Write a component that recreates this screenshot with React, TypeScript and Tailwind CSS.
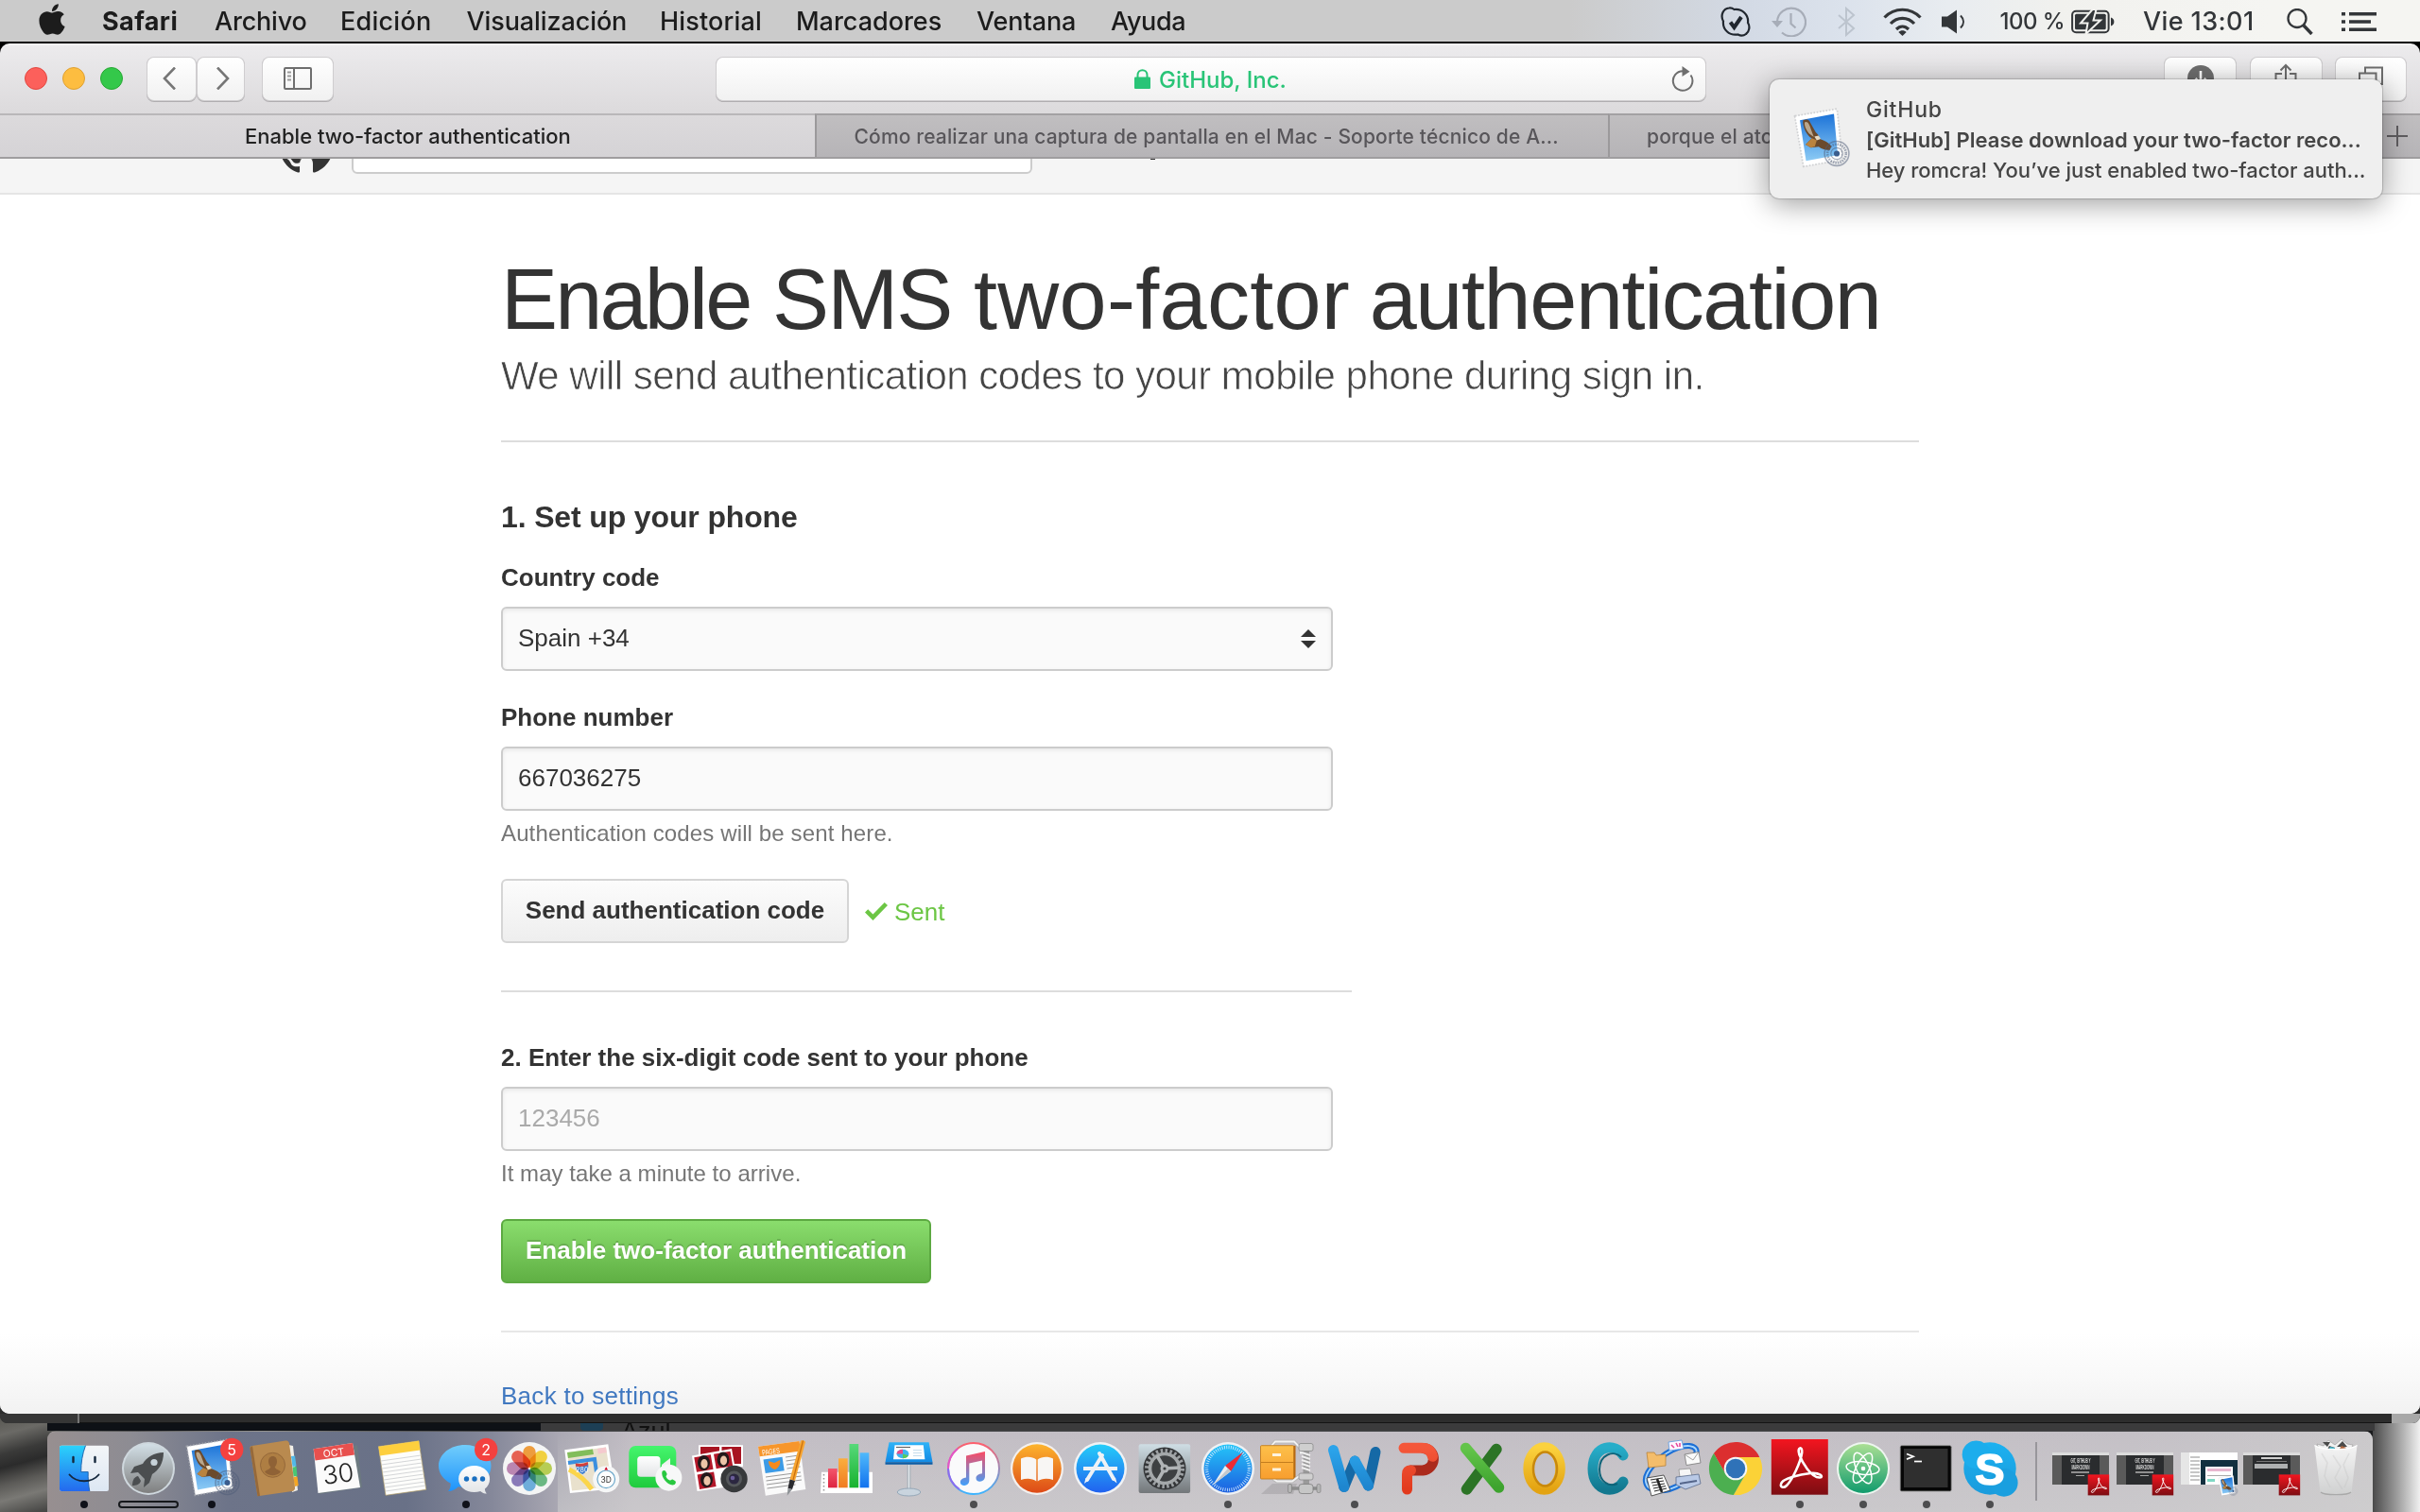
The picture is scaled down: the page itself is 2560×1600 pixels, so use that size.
import React from "react";
import { FaApple } from "react-icons/fa";

type IconProps = { className?: string };

/* ---------- Dock icons, all on a 64 × 64 grid ---------- */

function Svg({ children, className }: { children: React.ReactNode; className?: string }) {
  return (
    <svg viewBox="0 0 64 64" className={className ?? "h-16 w-16 overflow-visible"}>
      {children}
    </svg>
  );
}

function Defs() {
  const stops: [string, string, string][] = [
    ["gFinderL", "#2bd3fb", "#2469ee"],
    ["gFinderR", "#f4f6f8", "#dde7f3"],
    ["gLaunch", "#d2dfe6", "#7f7f7f"],
    ["gSky", "#1c73d8", "#8ccbf5"],
    ["gMsg", "#71cdfb", "#1e93fb"],
    ["gWhite", "#ffffff", "#e2e4e6"],
    ["gFace", "#45f56d", "#1fcb3d"],
    ["gRing", "#ff5f6d", "#3cb4ff"],
    ["gNote", "#fb4b63", "#3fa0fb"],
    ["gBooks", "#fdb42d", "#dd4a17"],
    ["gStore", "#25cdf9", "#2162ef"],
    ["gPrefs", "#cfdee5", "#73777a"],
    ["gSafari", "#25c5f8", "#1c5fe0"],
    ["gCab", "#fdc04a", "#f89e2f"],
    ["gW", "#2ba3ea", "#1e86cf"],
    ["gP", "#f4573a", "#e23a1d"],
    ["gX", "#63c44a", "#3da32e"],
    ["gO", "#fbd23e", "#e3a312"],
    ["gC", "#27adc9", "#12788f"],
    ["gAcro", "#f3151f", "#7d0d12"],
    ["gAtom", "#aadf94", "#119b6d"],
    ["gSkype", "#1cb1f0", "#1a9bdc"],
    ["gKey", "#2fb3f7", "#138ae4"],
    ["gRed", "#f4566c", "#dd2440"],
    ["gOrg", "#fbae3d", "#f07c22"],
    ["gGrn", "#57d97a", "#17b22e"],
    ["gBlu", "#4fb9fb", "#1272ee"],
    ["gTrash", "#f7f7f7", "#cfd0d0"],
  ];
  return (
    <svg className="absolute h-0 w-0">
      <defs>
        {stops.map(([id, a, b]) => (
          <linearGradient key={id} id={id} x1="0" y1="0" x2="0" y2="1">
            <stop offset="0" stopColor={a} />
            <stop offset="1" stopColor={b} />
          </linearGradient>
        ))}
      </defs>
    </svg>
  );
}

function Badge({ n }: { n: string }) {
  return (
    <>
      <circle cx="53.2" cy="12" r="12.2" fill="#f4413f" />
      <text x="53.2" y="17.6" fontSize="16" fontFamily="Inter, sans-serif" textAnchor="middle" fill="#fff">
        {n}
      </text>
    </>
  );
}

const Finder = () => (
  <Svg>
    <rect x="6" y="7.7" width="52" height="48.3" rx="2" fill="url(#gFinderR)" />
    <path d="M8 7.7H33.5C30 17 28.7 26 28.7 35.6H36.2C36 42 36.6 50 37.8 56H8a2 2 0 0 1-2-2V9.7a2 2 0 0 1 2-2z" fill="url(#gFinderL)" />
    <path d="M33.5 7.7C30 17 28.7 26 28.7 35.6H36.2C36 42 36.6 50 37.8 56" fill="none" stroke="#1b5fa8" strokeWidth=".9" />
    <path d="M20.5 20v5M43.5 20v5" stroke="#14273c" strokeWidth="2.4" strokeLinecap="round" />
    <path d="M16.5 38.5C24 47.5 40 47.5 47.5 38.5" fill="none" stroke="#14273c" strokeWidth="1.9" strokeLinecap="round" />
  </Svg>
);

const Launchpad = () => (
  <Svg>
    <circle cx="32" cy="32" r="28" fill="#cfd8de" />
    <circle cx="32" cy="32" r="26" fill="url(#gLaunch)" />
    <path d="M48 15C38 15 30 20 26 27l-9 3-4 7 8-1 7 7-1 9 6-5 3-9C43 34 48 26 48 15z" fill="#4b4e50" />
    <circle cx="38" cy="25.5" r="3.6" fill="#c6d2d9" />
    <path d="M21 40c-5 1-6 6-6 10 4 0 8-1 9-5" fill="#4b4e50" />
  </Svg>
);

const MailStamp = ({ badge, className }: { badge?: string } & IconProps) => (
  <Svg className={className}>
    <path d="M5.8 8.7L48.5 1.5 54 53 14.6 60z" fill="#fff" stroke="#b9bbbe" strokeOpacity=".6" strokeWidth="2.4" strokeDasharray="1.6 1.6" />
    <path d="M6.4 9.3L48 2.2 53.3 52.5 15.1 59.3z" fill="#fff" />
    <path d="M10.7 12.9L45.6 6.4 49.5 48.500 17 54.600z" fill="url(#gSky)" />
    <path d="M13.900 12.900C17 11.500 19.500 12 20.400 13.600L26.800 24.900C29 27 31 29.500 31.700 32.300 36 33.500 40 36 43 39.400L41.400 43.300C38 44 33 42.500 30 40L22 41 16.500 37.800 23 31.300C18 29.500 13 19 13.900 12.900z" fill="#6b4a2c" />
    <path d="M15.500 15c3-2 5 2 6.500 7l3 8-5-3.500c-3-4-5-8-4.500-11.500z" fill="#b9a68c" />
    <path d="M16.500 37.800L23 31.300l5 2.200-2 6.200-4 1.300z" fill="#b9833f" />
    <path d="M25.500 29.500l4.500-.8 2 3.200-4 1.500z" fill="#e8dcc4" />
    <g fill="none" stroke="#4d5c78" strokeOpacity=".5">
      <circle cx="48.5" cy="47" r="12.5" strokeWidth="1.5" />
      <circle cx="48.5" cy="47" r="9.5" strokeWidth="2.5" strokeDasharray="1.5 1" />
      <circle cx="48.5" cy="47" r="6" strokeWidth="1.2" />
    </g>
    <circle cx="48.5" cy="47" r="3" fill="#3b5d8d" />
    {badge && <Badge n={badge} />}
  </Svg>
);

const Contacts = () => (
  <Svg>
    <path d="M46 7l5 1 5 47-6 2z" fill="#f2efe8" />
    <path d="M49 19l4-.5 1.5 11-4 .5z" fill="#52b9e8" />
    <path d="M50.5 30.5l4-.5 1 10-4 .5z" fill="#48c774" />
    <path d="M51.5 41l4-.5 1.2 9.5-4 1z" fill="#f5a623" />
    <path d="M7.5 8L43 2.5c2-.3 3.6.8 4 2.8L53 52c.3 2-.8 3.6-2.8 4L13.5 61.3 5.4 10c0-1 .8-1.8 2.1-2z" fill="#b98a4f" />
    <path d="M5.4 10l8.1 51.3 2.5-.4L8 8z" fill="#96693a" />
    <circle cx="29.5" cy="28.3" r="13" fill="#ae7e43" stroke="#94683a" strokeWidth="1" />
    <path d="M29.5 19c3 0 4.5 2.4 4.5 5.5 0 2.5-1 4.5-2.3 5.8.3 2.5 4.3 3 6.3 5.2-4.5 5-12.5 5-17 0 2-2.2 6-2.7 6.3-5.2C26 29 25 27 25 24.5c0-3.1 1.5-5.5 4.5-5.5z" fill="#8f6236" />
  </Svg>
);

const CalendarIcon = () => (
  <Svg>
    <path d="M8 18l44-11 5 45-45 7z" fill="#6d7a80" />
    <path d="M5.7 11.3L47 5l8 47-44.5 6z" fill="#fbfbfb" />
    <path d="M5.7 11.3L47 5l2 12.5L7.5 23.5z" fill="#e8504e" />
    <g transform="rotate(-7 32 32)">
      <text x="29" y="18.5" fontSize="10.5" fontFamily="Inter, sans-serif" textAnchor="middle" fill="#fff">
        OCT
      </text>
      <text x="31" y="47" fontSize="27" fontWeight="300" fontFamily="Inter, sans-serif" textAnchor="middle" fill="#222">
        30
      </text>
    </g>
  </Svg>
);

const Notes = () => (
  <Svg>
    <path d="M7.4 8.7L50 2.7l7.8 51.6L15 60.3z" fill="#fdfdfb" stroke="#b5a06a" strokeWidth=".7" />
    <path d="M7.4 8.7L50 2.7l1.4 9.8L8.9 18.6z" fill="#fdcf3e" />
    <path
      d="M9.8 24l42.5-6M10.4 28l42.5-6M11 32l42.5-6M11.6 36l42.5-6M12.2 40l42.5-6M12.8 44l42.5-6M13.4 48l42.5-6M14 52l42.5-6M14.6 56l42.5-6"
      stroke="#c9ccce"
      strokeWidth=".8"
    />
  </Svg>
);

const Messages = () => (
  <Svg>
    <path d="M31 7c15.3 0 27.5 9.6 27.5 22.2S46.3 52 31 52c-2.7 0-5-.2-7.3-.8C21 54 17 56 13 56c2-2 3-5 2.5-8.5C7.8 43.5 3 37 3 29.2 3 16.6 15.7 7 31 7z" fill="url(#gMsg)" />
    <path d="M40.6 29c9.2 0 16.5 6 16.5 14 0 4.5-2 8-5.2 10.5 0 2 .8 3.7 2 5-2.6 0-5-1-6.7-2.6-2 .7-4.3 1.1-6.6 1.1-9.2 0-16.5-6-16.5-14s7.3-14 16.5-14z" fill="url(#gWhite)" />
    <g fill="#1a6fc0">
      <circle cx="32.5" cy="43" r="2.7" />
      <circle cx="41" cy="43" r="2.7" />
      <circle cx="49.5" cy="43" r="2.7" />
    </g>
    <Badge n="2" />
  </Svg>
);

const Photos = () => {
  const petals = ["#f7941e", "#fbd220", "#b5cf3a", "#57b573", "#5aa7de", "#7b68b5", "#b877ab", "#ee4b38"];
  return (
    <Svg>
      <circle cx="32" cy="32" r="28" fill="#f4f5f5" />
      {petals.map((c, i) => (
        <rect key={c} x="25.3" y="8" width="13.4" height="23" rx="6.7" fill={c} fillOpacity=".85" className="mix-blend-multiply" transform={`rotate(${i * 45} 32 32)`} />
      ))}
    </Svg>
  );
};

const Maps = () => (
  <Svg>
    <path d="M2.3 12.3L48.3 6.3l7.5 47L8 58z" fill="#fff" />
    <path d="M5 15l41-5.5 6.5 41.5L10 55.5z" fill="#e9e1cd" />
    <path d="M5 15l27-3.5 1 5.5L6 21z" fill="#82bd5a" />
    <path d="M37 11l9-1.5.8 5.5-9 1.5z" fill="#f5c9ce" />
    <path d="M6 26l28-4 4 28" fill="none" stroke="#3a8fdf" strokeWidth="4" />
    <path d="M7 33c10 5 18 12 24 21" fill="none" stroke="#fbd54a" strokeWidth="5" />
    <path d="M14 27.5c4 1 9 .5 13-1.5 1 5 0 9-5.5 12-5-2-7-5-7.5-10.5z" fill="#3b7dd0" />
    <path d="M13.8 26.5c4 1 9 .5 13-1.5l.2 3c-4 2-9 2.5-13 1.5z" fill="#d43f3a" />
    <text x="20.8" y="35.5" fontSize="7" fontFamily="Inter, sans-serif" textAnchor="middle" fill="#fff">
      280
    </text>
    <circle cx="46.2" cy="43.3" r="14" fill="#f6f7f7" />
    <circle cx="46.2" cy="43.3" r="9.3" fill="#fff" stroke="#6aa6c9" strokeWidth="1.2" />
    <path d="M46.2 30.3l1.8 3.2h-3.6z" fill="#d0021b" />
    <text x="46.2" y="46.5" fontSize="8.5" fontFamily="Inter, sans-serif" textAnchor="middle" fill="#333">
      3D
    </text>
  </Svg>
);

const FaceTime = () => (
  <Svg>
    <rect x="3.3" y="8" width="50" height="44.3" rx="7" fill="url(#gFace)" />
    <rect x="12.2" y="19" width="24.3" height="21.7" rx="3.5" fill="url(#gWhite)" />
    <path d="M38 28l9-7v18l-9-7z" fill="#f0f2f0" />
    <circle cx="45.4" cy="41.7" r="14" fill="#f7f8f8" />
    <path d="M38.5 35c1.5-1.5 3-1.5 4 .5l1 2c.5 1-1 1.8-1 3 .8 2 2 3.3 4 4 1 .3 2-1.4 3-1l2.5 1.5c1.5 1 1 2.5-.5 4-6 2.5-15-7.5-13-14z" fill="#28c840" />
  </Svg>
);

const PhotoBooth = () => (
  <Svg>
    <path d="M10 7.3h47V30H10z" fill="#fff" />
    <path d="M12 9h20v10H12zM34.5 9h20.5v18H34.5z" fill="#a81422" />
    <path d="M3 18.5l42-7.5 7 39L8.5 56z" fill="#fff" />
    <path d="M5.3 20.3l17.5-3 2.7 15.5-17.5 3zM26 16.7l17.5-3 2.7 15.5-17.5 3zM8.6 38.5l17.5-3 2.5 15.5-17.5 3z" fill="#b3182a" />
    <g fill="#23181a">
      <ellipse cx="15.5" cy="26" rx="6.5" ry="8" />
      <ellipse cx="36" cy="22.5" rx="6.5" ry="8" />
      <ellipse cx="18.5" cy="44" rx="6.5" ry="8" />
    </g>
    <g fill="#ecc4a8">
      <ellipse cx="16" cy="27" rx="3.6" ry="5" />
      <ellipse cx="36.5" cy="23.5" rx="3.6" ry="5" />
      <ellipse cx="19" cy="45" rx="3.6" ry="5" />
    </g>
    <circle cx="47.5" cy="43" r="14.2" fill="#37393b" />
    <circle cx="47.5" cy="43" r="8.5" fill="#55585b" />
    <circle cx="47.5" cy="43" r="5.5" fill="#2b2740" />
    <circle cx="46" cy="42" r="2.3" fill="#6a5d9a" />
  </Svg>
);

const Pages = () => (
  <Svg>
    <path d="M5 8.7L48.5 3l6.8 51L12.8 60.7z" fill="#fafafa" />
    <path d="M5 8.7L48.5 3l1.6 10.5L6.6 19.3z" fill="#f7962b" />
    <g transform="rotate(-8 20 14)">
      <text x="9" y="16.5" fontSize="7.5" fontFamily="Inter, sans-serif" fill="#fff" textLength="19" lengthAdjust="spacingAndGlyphs">
        PAGES
      </text>
    </g>
    <path d="M10.5 22.5l20-2.7 2.2 14.5-20 2.7z" fill="#3c9be6" />
    <path d="M16 24l6 2 6-3c1 4-1 8-5 10-5-1-7-5-7-9z" fill="#f78a1d" />
    <path d="M34 20l14-2M34.5 24l14-2M35 28l14-2M35.5 32l14-2M13 41l37-5M13.5 45l37-5M14 49l37-5M14.5 53l30-4" stroke="#9a9a9a" strokeWidth="1" />
    <path d="M50 2.5c2.5-.5 4.5 0 5 1.5L44 45l-5.5-1.5z" fill="#f7a531" />
    <path d="M52.5 2.5L42 44" stroke="#c9700f" strokeWidth="1.2" />
    <path d="M38.5 43.5L44 45l-3 9-4.5-1z" fill="#2a2a2e" />
    <path d="M36.5 53l4.5 1-5.3 6.7z" fill="#8e9296" />
  </Svg>
);

const Numbers = () => (
  <Svg>
    <path d="M5 35.7h54V58H4z" fill="#fff" />
    <path d="M7.5 38v18" stroke="#999" strokeWidth="1.6" strokeDasharray="1.6 2.4" />
    <rect x="12" y="32" width="9.7" height="20.3" fill="url(#gRed)" />
    <rect x="23" y="21.3" width="9.7" height="31" fill="url(#gOrg)" />
    <rect x="34.5" y="6" width="9.7" height="46.3" fill="url(#gGrn)" />
    <rect x="45.6" y="15.3" width="9.7" height="37" fill="url(#gBlu)" />
  </Svg>
);

const Keynote = () => (
  <Svg>
    <rect x="28.6" y="28" width="3.8" height="27" fill="#a9b2ba" />
    <rect x="29.8" y="28" width="1.4" height="27" fill="#e6ebef" />
    <ellipse cx="30.5" cy="57" rx="12.3" ry="4" fill="#c9d4de" stroke="#8fa3b4" strokeWidth=".9" />
    <path d="M9.5 4.3h42.1l3.9 21H5.5z" fill="url(#gKey)" />
    <path d="M5.5 25.3h50v2.5h-50z" fill="#0c5da5" />
    <path d="M15.5 7.3h30.3l1.6 15H14z" fill="#fff" />
    <path d="M17 9.5h15" stroke="#666" strokeWidth="1.2" />
    <ellipse cx="24" cy="16.5" rx="6.5" ry="4.7" fill="#3fb5f0" />
    <path d="M24 16.5h-6.5a6.5 4.7 0 0 1 6.5-4.7z" fill="#e94d8a" />
    <path d="M24 16.5v4.7a6.5 4.7 0 0 0 6-3z" fill="#5cc95c" />
    <path d="M35 12.5h9M35 15.5h9M35 18.5h9" stroke="#c5dcec" strokeWidth="1.2" />
  </Svg>
);

const ITunes = () => (
  <Svg>
    <circle cx="32" cy="32" r="27" fill="#fafafb" stroke="url(#gRing)" strokeWidth="2" />
    <path d="M5 32a27 27 0 0 1 10-21" fill="none" stroke="#e456c8" strokeWidth="2" />
    <path d="M5 32a27 27 0 0 0 12 22" fill="none" stroke="#8a6cf0" strokeWidth="2" />
    <path d="M24 18.5L44 14v26.5c0 3-2.5 5-5.2 5.3-2.5.2-4.3-1.3-4.3-3.5 0-3.3 3-4.3 6.5-5V23.5L27.3 26.5v18.2c0 3-2.4 5-5.1 5.3-2.5.2-4.3-1.3-4.3-3.5 0-3.3 2.8-4.3 6.1-5z" fill="url(#gNote)" />
  </Svg>
);

const IBooks = () => (
  <Svg>
    <circle cx="32" cy="32" r="28" fill="#f3f0ee" />
    <circle cx="32" cy="32" r="25.8" fill="url(#gBooks)" />
    <path d="M31.3 22.5C27 19 20 19 15 21.5V44c5.5-2 12-2 16.3 1.5zM32.7 22.5C37 19 44 19 49 21.5V44c-5.5-2-12-2-16.3 1.5z" fill="#f8f6f4" />
  </Svg>
);

const AppStore = () => (
  <Svg>
    <circle cx="32" cy="32" r="28" fill="#f1f3f5" />
    <circle cx="32" cy="32" r="25.5" fill="url(#gStore)" />
    <g stroke="#eef2f6" strokeWidth="4" strokeLinecap="round">
      <path d="M14 32h36" strokeLinecap="butt" />
      <path d="M34 18L18 44M31 16l15 27" />
    </g>
    <path d="M16.5 42l3.5 2-5 4zM44.5 43.5l3.5-2 1.5 6z" fill="#eef2f6" />
  </Svg>
);

const Prefs = () => (
  <Svg>
    <rect x="4.6" y="6.3" width="54.5" height="51.7" rx="2" fill="url(#gPrefs)" />
    <circle cx="32" cy="32" r="22.5" fill="#343638" />
    <circle cx="32" cy="32" r="19" fill="none" stroke="#9da1a4" strokeWidth="4" strokeDasharray="2.5 2.475" />
    <circle cx="32" cy="32" r="15.5" fill="#3d4042" stroke="#a4a8aa" strokeWidth="3.6" />
    <path d="M32 32L24 18.5M32 32l16-1M32 32L24 46" stroke="#b0b4b6" strokeWidth="3.6" />
    <circle cx="32" cy="32" r="4.5" fill="#b0b4b6" />
    <circle cx="32" cy="32" r="1.6" fill="#3a3c3e" />
  </Svg>
);

const SafariIcon = () => (
  <Svg>
    <circle cx="32" cy="32" r="28" fill="#eef1f4" />
    <circle cx="32" cy="32" r="25.5" fill="url(#gSafari)" />
    <circle cx="32" cy="32" r="22.5" fill="none" stroke="#d9efff" strokeWidth="3.5" strokeDasharray=".8 1.556" />
    <path d="M48 14.5L29 29l6 6z" fill="#ee2b34" />
    <path d="M16 49.5L29 29l6 6z" fill="#eceff1" />
    <path d="M16 49.5L32 32l3 3z" fill="#c3c9cd" />
  </Svg>
);

const Unarchiver = () => (
  <Svg>
    <path d="M0 59l12-11h26l-4 11z" fill="#000" fillOpacity=".1" />
    <path d="M11 8l4-4.5h20l7 7v6M13 43l4 2.5h16l8-6" fill="none" stroke="#b9b9b9" strokeWidth="4" />
    <path d="M11 8l4-4.5h20l7 7v6M13 43l4 2.5h16l8-6" fill="none" stroke="#f3f3f3" strokeWidth="1.8" />
    <rect x="44.5" y="8" width="6.5" height="42" fill="#9a9a9a" />
    <path d="M43 15l9 3M43 19l9 3M43 23l9 3M43 27l9 3M43 31l9 3" stroke="#efefef" strokeWidth="2" />
    <rect x="40" y="5.5" width="15" height="8" rx="2" fill="#cfcfcf" stroke="#8a8a8a" strokeWidth=".8" />
    <rect x="40" y="37" width="15" height="7" rx="2" fill="#cfcfcf" stroke="#8a8a8a" strokeWidth=".8" />
    <path d="M30 53h32" stroke="#8d8d8d" strokeWidth="3.5" />
    <rect x="40" y="48.5" width="15" height="10" rx="3" fill="#c6c6c6" stroke="#7f7f7f" strokeWidth=".8" />
    <rect x="28.5" y="48.5" width="4" height="9" rx="1.5" fill="#b5b5b5" stroke="#777" strokeWidth=".6" />
    <rect x="59" y="48.5" width="4" height="9" rx="1.5" fill="#b5b5b5" stroke="#777" strokeWidth=".6" />
    <path d="M34 7.7h2.5v33L34 43z" fill="#b86a12" />
    <rect x="-.5" y="7.7" width="35" height="35.3" rx="1" fill="url(#gCab)" stroke="#c37d1d" strokeWidth=".9" />
    <path d="M0 25.5h34" stroke="#c37d1d" strokeWidth="1" />
    <path d="M12 17.5h9M12 33h9" stroke="#fdf3e0" strokeWidth="3" />
  </Svg>
);

const WordIcon = () => (
  <Svg>
    <g fill="none" strokeWidth="11" strokeLinecap="round" strokeLinejoin="round">
      <path d="M20.8 51.5L32.2 24M46.5 50L54 14.5" stroke="#1569a6" />
      <path d="M9.5 12.5l11.3 39M32.2 24l14.3 26" stroke="url(#gW)" />
    </g>
  </Svg>
);

const PowerPointIcon = () => (
  <Svg>
    <g fill="none" strokeWidth="11" strokeLinecap="round">
      <path d="M38 10.5c15 2 13 22-1 23.5H24" stroke="#ab2a1c" />
      <path d="M17 10.3h19c6 0 10 3 11.5 9M20.5 54V38c0-3 1-4 4-4" stroke="url(#gP)" />
    </g>
  </Svg>
);

const ExcelIcon = () => (
  <Svg>
    <g fill="none" strokeWidth="11.5" strokeLinecap="round">
      <path d="M47 11.5L15.5 54" stroke="#2c7426" />
      <path d="M14.5 10.5L49.5 52" stroke="url(#gX)" />
    </g>
  </Svg>
);

const OutlookIcon = () => (
  <Svg>
    <ellipse cx="30.6" cy="32" rx="17" ry="22.5" fill="none" stroke="url(#gO)" strokeWidth="10.5" />
    <ellipse cx="31.5" cy="32.5" rx="12.5" ry="18" fill="none" stroke="#c8880c" strokeWidth="2.5" />
  </Svg>
);

const CommunicatorIcon = () => (
  <Svg>
    <path d="M47 18C40 5 15 6 15 32c0 26 25 27 32 14" fill="none" stroke="url(#gC)" strokeWidth="11" strokeLinecap="round" />
    <path d="M45 20c-8-8-23-3-23 13 0 13 10 19 19 15" fill="none" stroke="#0e6378" strokeWidth="2" />
  </Svg>
);

const Converter = () => (
  <Svg>
    <path d="M50 22c14-6 8-19-12-12C20 16 2 36 4 46c2 12 22 12 38 2" fill="none" stroke="#1b6fd6" strokeWidth="6" />
    <path d="M50 22c14-6 8-19-12-12C20 16 2 36 4 46c2 12 22 12 38 2" fill="none" stroke="#a9d6fb" strokeWidth="1.8" />
    <path d="M28 4l14-2 2 9-15 2z" fill="#fdf7ff" stroke="#5a9be0" strokeWidth=".8" />
    <path d="M31 7l3 3M36 5l2 4M40 5v4" stroke="#e6489b" strokeWidth="1.6" />
    <path d="M5 15h8l2 3 10-1v12L7 31z" fill="#f4bd6b" stroke="#b9833a" strokeWidth=".8" />
    <path d="M45 17l15-2.5L62 26l-15 2.5z" fill="#fafafa" stroke="#777" strokeWidth=".8" />
    <path d="M45 17l9 6 6-8.5" fill="none" stroke="#999" strokeWidth=".9" />
    <path d="M39 33l12-1 2 8-13 1z" fill="#f6f6f6" stroke="#888" strokeWidth=".7" />
    <path d="M36 41l24-3 2 10-16 6-10-5z" fill="#b9c9e6" stroke="#5b6b8b" strokeWidth=".8" />
    <path d="M40 48l18-3" stroke="#54658a" strokeWidth="2" />
    <path d="M5 42l18-3 7 16-20 6z" fill="#fafafa" stroke="#333" strokeWidth=".8" />
    <path d="M9 44l13-2M10 47l13-2M11 50l13-2M12 53l13-2.5M13 56l13-3" stroke="#333" strokeWidth="1.2" />
    <path d="M16 43l5 14" stroke="#222" strokeWidth="2.5" />
  </Svg>
);

const Chrome = () => (
  <Svg>
    <path d="M8.9 16.1A28 28 0 0 1 57.3 19.9H32L21.5 38z" fill="#dc2f2f" />
    <path d="M57.3 19.9A28 28 0 0 1 29.8 60L42.5 38 32 19.9z" fill="#fbd237" />
    <path d="M29.8 60A28 28 0 0 1 8.9 16.1L21.5 38h21z" fill="#4caf50" />
    <circle cx="32" cy="32" r="12.3" fill="#f4f6f7" />
    <circle cx="32" cy="32" r="10.3" fill="#2f72b8" />
  </Svg>
);

const Acrobat = ({ className }: IconProps) => (
  <Svg className={className}>
    <rect x="1.8" y="1" width="60" height="58.7" fill="url(#gAcro)" />
    <path
      d="M12 48.5C13 42 34 38 43 37c10-1 15 4 10 4.5C44 42 34 25 31.3 17c-2.3-8 3.5-9 2.9-2C33 25 24 44 18 50c-3 3-7 2-6-1.5z"
      fill="none"
      stroke="#fff"
      strokeWidth="2.6"
    />
  </Svg>
);

const AtomIcon = () => (
  <Svg>
    <circle cx="32" cy="32" r="28" fill="#eef6f0" />
    <circle cx="32" cy="32" r="26" fill="url(#gAtom)" />
    <g fill="none" stroke="#fff" strokeWidth="1.5">
      <ellipse cx="31.5" cy="31.5" rx="17.5" ry="6.8" transform="rotate(6 31.5 31.5)" />
      <ellipse cx="31.5" cy="31.5" rx="17.5" ry="6.8" transform="rotate(66 31.5 31.5)" />
      <ellipse cx="31.5" cy="31.5" rx="17.5" ry="6.8" transform="rotate(118 31.5 31.5)" />
    </g>
    <circle cx="32" cy="32" r="2.3" fill="#fff" />
  </Svg>
);

const TerminalIcon = () => (
  <Svg>
    <rect x="4.2" y="7.7" width="54" height="48.3" rx="1.5" fill="#060606" stroke="#8b8b8b" strokeWidth=".8" />
    <rect x="8" y="11" width="46.5" height="41" fill="#2f2f2f" />
    <path d="M11 16.5l7 2.8-7 2.8" fill="none" stroke="#fff" strokeWidth="1.7" />
    <path d="M19 24.5h8" stroke="#fff" strokeWidth="1.7" />
  </Svg>
);

const SkypeIcon = () => (
  <Svg>
    <circle cx="32" cy="32" r="27.7" fill="url(#gSkype)" />
    <circle cx="17.5" cy="17.2" r="14.8" fill="#1cadec" />
    <circle cx="46.8" cy="46.9" r="14.8" fill="#1a9fdf" />
    <text x="32" y="49" fontSize="47" fontWeight="700" fontFamily="'Liberation Sans', sans-serif" textAnchor="middle" fill="#fff" stroke="#fff" strokeWidth="1.5" strokeLinejoin="round">
      S
    </text>
  </Svg>
);

const Trash = () => (
  <svg viewBox="0 0 46 64" className="h-16 w-[46px] overflow-visible">
    <path d="M3 6l7 2 5-6 7 5 7-6 6 5 6 1-3 7H6z" fill="#f1f1f1" stroke="#999" strokeWidth=".6" />
    <path d="M9 4l5 5 3-5zM24 9l6-6 5 6zM16 8l6 2-2 3-6-1z" fill="#4a4a4a" />
    <path d="M17 9l5 1-1 2-5-1z" fill="#3fb8d0" />
    <path d="M29 8l5 2-2 3-5-2z" fill="#b0653d" />
    <path d="M.5 7.5C8 13 38 13 45.5 7.5L39.5 57c-1 5-32 5-33 0z" fill="url(#gTrash)" fillOpacity=".95" />
    <path d="M.5 7.5C8 13 38 13 45.5 7.5" fill="none" stroke="#fff" strokeWidth="1.4" />
    <path d="M8 16l6 10-3 14 6 12M20 18l8 12-6 12 8 12M37 16l-6 12 5 14-4 10" fill="none" stroke="#c3c4c4" strokeWidth="1.6" strokeOpacity=".35" />
    <path d="M7 57c3 3.5 29 3.5 32 0" fill="none" stroke="#a9a9a9" strokeWidth="1.2" />
  </svg>
);

/* ---------- Minimised windows in the dock ---------- */

function PdfThumb() {
  return (
    <div className="relative h-[34px] w-[60px] bg-[#5a5a5a]">
      <div className="h-[3px] bg-[#dcdcdc]" />
      <div className="mx-auto flex h-[31px] w-[40px] flex-col items-center bg-[#2a2c2e]">
        <svg viewBox="0 0 40 17" className="h-[17px] w-10" fontFamily="'Liberation Sans', sans-serif" fontWeight="700" fontSize="7" fill="#d8d8d8" textAnchor="middle">
          <text x="20" y="7.5" textLength="21" lengthAdjust="spacingAndGlyphs">
            GIT, GITHUB Y
          </text>
          <text x="20" y="14.5" textLength="19" lengthAdjust="spacingAndGlyphs">
            MARKDOWN
          </text>
        </svg>
        <div className="h-[2px] w-[19px] bg-[#8f8f8f]" />
        <div className="mt-[2px] h-[1px] w-[9px] bg-[#a5a5a5]" />
      </div>
      <Acrobat className="absolute top-[23px] left-[37px] h-6 w-6" />
    </div>
  );
}

function MailThumb() {
  return (
    <div className="relative flex h-[34px] w-[60px] bg-white">
      <div className="h-full w-[9px] bg-[#e6e6e6]" />
      <div className="flex h-full w-[12px] flex-col gap-[2px] px-[1px] pt-[4px]">
        {[0, 1, 2, 3, 4, 5, 6].map((i) => (
          <div key={i} className="h-[2px] bg-[#c6c6c6]" />
        ))}
      </div>
      <div className="mt-[8px] flex-1 bg-[#12303f] px-[5px] pt-[7px]">
        <div className="h-full bg-white pt-[2px]">
          <div className="mx-[2px] h-[3px] bg-[#e8b7cf]" />
          <div className="mx-[2px] mt-[4px] h-[1px] bg-[#aaa]" />
          <div className="mt-[3px] ml-[2px] h-[3px] w-[8px] bg-[#7fd8c4]" />
        </div>
      </div>
      <MailStamp className="absolute top-[24px] left-[38px] h-[23px] w-[23px] overflow-visible" />
    </div>
  );
}

function SearchThumb() {
  return (
    <div className="relative h-[34px] w-[60px] bg-[#5a5a5a]">
      <div className="h-[3px] bg-[#dcdcdc]" />
      <div className="mx-auto flex h-[31px] w-[40px] flex-col items-center bg-[#2a2c2e] pt-[2px]">
        <div className="h-[2px] w-[22px] bg-[#d0d0d0]" />
        <div className="mt-[2px] h-[1px] w-[32px] bg-[#777]" />
        <div className="mt-[2px] h-[5px] w-[35px] bg-[#aeb0b1]" />
      </div>
      <Acrobat className="absolute top-[23px] left-[37px] h-6 w-6" />
    </div>
  );
}

/* ---------- Menu bar ---------- */

function MenuBar() {
  return (
    <div className="flex h-11 shrink-0 items-center bg-[linear-gradient(90deg,#cbcbcb_0,#cbcbcb_1660px,#d3dae5_1850px,#dbe2ec_1950px,#e8ecf0_2060px,#f1f1ee_2180px,#f5f5f2_2400px,#f5f5f2_2560px)] pt-[1px] pl-[42px] font-['Inter',sans-serif] text-[27px] leading-[43px] font-[450] whitespace-nowrap text-[#1c1c1c]">
      <div className="flex w-[66px] items-center">
        <FaApple className="-mt-[4px] -ml-[1px] h-[37px] w-[28px]" />
      </div>
      <div className="w-[119px] font-bold tracking-[0.4px]">Safari</div>
      <div className="w-[133px] tracking-[-0.2px]">Archivo</div>
      <div className="w-[133.5px] tracking-[0.25px]">Edición</div>
      <div className="w-[204.5px] tracking-[-0.1px]">Visualización</div>
      <div className="w-[144px] tracking-[0.18px]">Historial</div>
      <div className="w-[191px] tracking-[-0.02px]">Marcadores</div>
      <div className="w-[142px] tracking-[-0.1px]">Ventana</div>
      <div className="tracking-[-0.4px]">Ayuda</div>
      <div className="ml-auto flex items-center pr-[46px]">
        <div className="w-[54.5px]">
          <svg viewBox="0 0 32 32" className="h-8 w-8" fill="none" stroke="#20262e" strokeWidth="2.2">
            <path d="M9 1.5c2-.3 4 .3 5.5 1.5C23 2 30 8.500 29 17c2.5 4 1.5 9.500-2 12-2.5 2-6 2-8.500.5C9 31 2 24 3 15.500-.5 9 3 2 9 1.500z" />
            <path d="M10.500 16.500l4 5.500 7.500-11" strokeWidth="4" />
          </svg>
        </div>
        <div className="w-[69.5px]">
          <svg viewBox="0 0 37 32" className="h-8 w-[37px]" fill="none" stroke="#a7adb8" strokeWidth="2.2">
            <path d="M6 16A15 14.8 0 1 1 11 27.5" />
            <path d="M0 15h12l-6 7z" fill="#a7adb8" stroke="none" />
            <path d="M20.5 7v11l5 4.5" />
          </svg>
        </div>
        <div className="w-[48px]">
          <svg viewBox="0 0 19 32" className="h-8 w-[19px]" fill="none" stroke="#bcc4ce" strokeWidth="2">
            <path d="M1 9l16 14-8 7V2l8 7L1 23" />
          </svg>
        </div>
        <div className="w-[62px]">
          <svg viewBox="0 0 41 30" className="h-[30px] w-[41px]" fill="none" stroke="#333639" strokeWidth="3.2">
            <path d="M1.5 10.5c10.5-11 27.5-11 38 0" />
            <path d="M8 17c7-7.5 18-7.5 25 0" />
            <path d="M14 23c4-4 9-4 13 0" />
            <path d="M16.3 26c2.5-2.3 5.9-2.3 8.4 0L20.5 30z" fill="#333639" stroke="none" />
          </svg>
        </div>
        <div className="w-[62px]">
          <svg viewBox="0 0 25 26" className="h-[26px] w-[25px]">
            <path d="M0 7.5h6L16 .5v25l-10-7H0z" fill="#333639" />
            <path d="M20 6.5c4 4 4 9 0 13" fill="none" stroke="#333639" strokeWidth="2" />
          </svg>
        </div>
        <div className="w-[75px] text-[24px] tracking-[-0.5px] text-[#333639]">100 %</div>
        <div className="w-[76.5px]">
          <svg viewBox="0 0 46 26" className="mt-[1px] h-[26px] w-[46px]">
            <rect x="1.1" y="1.8" width="38.5" height="22.5" rx="4" fill="none" stroke="#333639" strokeWidth="2" />
            <rect x="4" y="4.8" width="32.7" height="16.5" rx="1.5" fill="#333639" />
            <path d="M42 8.5c4.5 1 4.5 8 0 9z" fill="#333639" />
            <path d="M22.5 0L10 14.5h7.5L15.5 26 31 11.5h-7.5L26.5 0z" fill="#333639" stroke="#f1f1ee" strokeWidth="2" />
          </svg>
        </div>
        <div className="w-[151.5px] tracking-[0.4px] text-[#333639]">Vie 13:01</div>
        <div className="w-[58.5px]">
          <svg viewBox="0 0 28 28" className="h-7 w-7" fill="none" stroke="#333639">
            <circle cx="11" cy="10.5" r="9.5" strokeWidth="2.3" />
            <path d="M17.5 17.5l9 9.5" strokeWidth="3.4" />
          </svg>
        </div>
        <div className="w-[37px]">
          <svg viewBox="0 0 37 20" className="h-5 w-[37px]" stroke="#333639" strokeWidth="3.4">
            <path d="M0 1.7h4M0 10h4M0 18.3h4M8 1.7h29M8 10h23M8 18.3h29" />
          </svg>
        </div>
      </div>
    </div>
  );
}

/* ---------- Safari toolbar and tabs ---------- */

function ToolButton({ className, children }: { className: string; children: React.ReactNode }) {
  return (
    <div className={`flex h-[45px] items-center justify-center rounded-[7px] bg-gradient-to-b from-white to-[#f1f1f1] shadow-[0_0_0_1px_#cfcdcf,0_1px_0_1px_#b0aeb0] ${className}`}>
      {children}
    </div>
  );
}

function Toolbar() {
  return (
    <div className="flex h-[74px] shrink-0 items-center border-t-2 border-[#f6f5f6] bg-gradient-to-b from-[#ecebed] to-[#dcdadc] pb-[2px] pl-[26px]">
      <div className="flex gap-4">
        <div className="h-6 w-6 rounded-full border border-[#e2463f] bg-[#fc605b]" />
        <div className="h-6 w-6 rounded-full border border-[#dfa031] bg-[#fdbd40]" />
        <div className="h-6 w-6 rounded-full border border-[#27a833] bg-[#34c84a]" />
      </div>
      <ToolButton className="ml-[26px] w-[51px]">
        <svg viewBox="0 0 14 24" className="mr-[6px] h-6 w-[14px]" fill="none" stroke="#767676" strokeWidth="2.6">
          <path d="M13 .5L2 12l11 11.5" />
        </svg>
      </ToolButton>
      <ToolButton className="ml-[2px] w-[49px]">
        <svg viewBox="0 0 14 24" className="ml-1 h-6 w-[14px]" fill="none" stroke="#767676" strokeWidth="2.6">
          <path d="M1 .5L12 12 1 23.5" />
        </svg>
      </ToolButton>
      <ToolButton className="ml-[20px] w-[74px]">
        <svg viewBox="0 0 30 24" className="h-6 w-[30px]" fill="none" stroke="#6e6e6e" strokeWidth="2">
          <rect x="1" y="1" width="28" height="22" rx="1" />
          <path d="M11 1v22" />
          <path d="M4 5.5h4M4 9.5h4M4 13.5h4" strokeWidth="1.8" stroke="#999" />
        </svg>
      </ToolButton>
      <div className="ml-[406px] flex h-[45px] w-[1046px] items-center rounded-[7px] bg-gradient-to-b from-white to-[#f1f1f1] pl-[442px] shadow-[0_0_0_1px_#cfcdcf,0_1px_0_1px_#b0aeb0]">
        <svg viewBox="0 0 17 21" className="h-[21px] w-[17px]">
          <path d="M3.5 9V6.5c0-7 10-7 10 0V9" fill="none" stroke="#29c477" strokeWidth="2" />
          <rect x="0" y="8.5" width="17" height="12.5" rx="1" fill="#29c477" />
        </svg>
        <span className="mt-[4px] ml-[9px] font-['Inter',sans-serif] text-[24px] leading-8 font-[450] tracking-[0px] text-[#29c477]">GitHub, Inc.</span>
        <svg viewBox="0 0 24 27" className="mr-[12px] ml-auto h-[27px] w-6">
          <path d="M20.5 9.5A10.3 10.3 0 1 1 12 5.2" fill="none" stroke="#6e6e6e" strokeWidth="2" />
          <path d="M11.5 0l8 5.8-8 5.2z" fill="#6e6e6e" />
        </svg>
      </div>
      <ToolButton className="ml-[486px] w-[75px]">
        <svg viewBox="0 0 28 28" className="h-7 w-7">
          <circle cx="14" cy="14" r="14" fill="#6e6e6e" />
          <path d="M14 6v13M8.5 14l5.5 6 5.5-6" fill="none" stroke="#fff" strokeWidth="2.6" />
        </svg>
      </ToolButton>
      <ToolButton className="ml-[15.5px] w-[75px]">
        <svg viewBox="0 0 24 32" className="h-8 w-6" fill="none" stroke="#6e6e6e" strokeWidth="2">
          <path d="M8 11H1.5v18h21V11H16M12 20V2M6.5 7.5L12 2l5.5 5.5" />
        </svg>
      </ToolButton>
      <ToolButton className="ml-[15.5px] w-[74px]">
        <svg viewBox="0 0 26 26" className="h-[26px] w-[26px]" fill="none" stroke="#6e6e6e" strokeWidth="2">
          <path d="M1 7.5h17.5V25H1zM7 7V1.5h18V19h-6" />
        </svg>
      </ToolButton>
    </div>
  );
}

function TabBar() {
  return (
    <div className="flex h-12 shrink-0 border-y-2 border-t-[#b9b7b9] border-b-[#9f9d9f] bg-[#d8d6d8] font-['Inter',sans-serif] leading-[45px] font-[450] whitespace-nowrap">
      <div className="w-[862px] bg-gradient-to-b from-[#dcdadc] to-[#d5d3d6] pl-[259px] text-[22px] tracking-[0px] text-[#222]">Enable two-factor authentication</div>
      <div className="-mt-[2px] w-[839px] border-t-2 border-l-2 border-t-[#a3a1a3] border-l-[#9b999b] bg-gradient-to-b from-[#c0bec0] to-[#b6b4b7] pl-[39.5px] text-[21px] tracking-[0.15px] text-[#58565a]">
        Cómo realizar una captura de pantalla en el Mac - Soporte técnico de A...
      </div>
      <div className="-mt-[2px] w-[820px] border-t-2 border-l-2 border-t-[#a3a1a3] border-l-[#9b999b] bg-gradient-to-b from-[#c0bec0] to-[#b6b4b7] pl-[39px] text-[21px] tracking-[0.15px] text-[#58565a]">
        porque el atom
      </div>
      <div className="-mt-[2px] flex flex-1 items-center border-t-2 border-t-[#a3a1a3] bg-gradient-to-b from-[#c0bec0] to-[#b6b4b7] pl-[4px]">
        <svg viewBox="0 0 22 22" className="h-[22px] w-[22px]" stroke="#5f5d60" strokeWidth="2">
          <path d="M11 0v22M0 11h22" />
        </svg>
      </div>
    </div>
  );
}

/* ---------- Page ---------- */

const fieldClass =
  "flex h-[68px] w-[880px] items-center rounded-[6px] border-2 border-[#ccc] bg-[#fafafa] pl-4 pb-[2px] text-[26px] shadow-[inset_0_2px_4px_rgba(0,0,0,0.075)]";
const labelClass = "text-[26px] leading-[30px] font-bold";
const hintClass = "mt-[9px] text-[24px] leading-[30px] tracking-[0.13px] text-[#767676]";

function GitHubMark() {
  return (
    <svg viewBox="0 0 16 16" className="mb-[20px] h-14 w-14 shrink-0" fill="#333">
      <path d="M8 0C3.58 0 0 3.58 0 8c0 3.54 2.29 6.53 5.47 7.59.4.07.55-.17.55-.38 0-.19-.01-.82-.01-1.49-2.01.37-2.53-.49-2.69-.94-.09-.23-.48-.94-.82-1.13-.28-.15-.68-.52-.01-.53.63-.01 1.08.58 1.23.82.72 1.21 1.87.87 2.33.66.07-.52.28-.87.51-1.07-1.78-.2-3.64-.89-3.64-3.95 0-.87.31-1.59.82-2.15-.08-.2-.36-1.02.08-2.12 0 0 .67-.21 2.2.82.64-.18 1.32-.27 2-.27s1.36.09 2 .27c1.53-1.04 2.2-.82 2.2-.82.44 1.1.16 1.92.08 2.12.51.56.82 1.27.82 2.15 0 3.07-1.87 3.75-3.65 3.95.29.25.54.73.54 1.48 0 1.07-.01 1.93-.01 2.2 0 .21.15.46.55.38A8.01 8.01 0 0 0 16 8c0-4.42-3.58-8-8-8z" />
    </svg>
  );
}

function Page() {
  return (
    <div className="flex h-[1328px] flex-col overflow-hidden bg-white font-['Liberation_Sans',Arial,sans-serif] whitespace-nowrap text-[#333]">
      <div className="flex h-[38px] shrink-0 items-end overflow-hidden border-b-2 border-[#e5e5e5] bg-[#f5f5f5] pl-[296px]">
        <GitHubMark />
        <div className="mb-[20px] ml-[20px] h-14 w-[720px] shrink-0 rounded-[6px] border-2 border-[#ccc] bg-white" />
        <div className="mb-[35px] ml-[125px] h-4 w-[5px] shrink-0 bg-[#333]" />
      </div>

      <div className="flex flex-1 flex-col items-start bg-[linear-gradient(180deg,#fff_0,#fff_1205px,#f9f9f9_1250px,#f2f2f2_1290px)] pl-[530px]">
        <h1 className="mt-[66px] text-[90px] leading-[91px] tracking-[-1.4px]">
          <span className="tracking-[-2.8px]">Enable</span> <span className="tracking-[-1.9px]">SMS</span>{" "}
          <span className="tracking-[0.3px]">two-factor</span>
          <span className="tracking-[-4.5px]"> </span>
          <span>authentication</span>
        </h1>
        <p className="mt-[9px] text-[42px] leading-[52px] tracking-[-0.52px] text-[#444] [-webkit-text-stroke:0.7px_white]">
          We will send authentication codes to your mobile phone during sign in.
        </p>
        <div className="mt-[42px] h-[2px] w-[1500px] bg-[#ddd]" />

        <h2 className="mt-[59px] text-[32px] leading-10 font-bold tracking-[-0.14px]">1. Set up your phone</h2>
        <div className={`mt-[29px] ${labelClass}`}>Country code</div>
        <div className={`mt-4 justify-between pr-[16px] ${fieldClass}`}>
          <span>Spain +34</span>
          <svg viewBox="0 0 16 20" className="mt-[2px] h-5 w-4" fill="#333">
            <path d="M8 0l8 8H0zM8 20l8-8H0z" />
          </svg>
        </div>

        <div className={`mt-[34px] ${labelClass}`}>Phone number</div>
        <div className={`mt-4 ${fieldClass}`}>667036275</div>
        <div className={hintClass}>Authentication codes will be sent here.</div>
        <div className="mt-[33px] flex items-center">
          <div className="flex h-[68px] w-[368px] items-center justify-center rounded-[6px] border-2 border-[#d5d5d5] bg-gradient-to-b from-[#fcfcfc] to-[#eee] pb-[2px] text-[26px] font-bold">
            Send authentication code
          </div>
          <svg viewBox="0 0 24 19" className="ml-[17px] h-[19px] w-6" fill="#6cc644">
            <path d="M24 3L8.5 19 0 10.5l3.2-3.3 5.3 5.3L20.7 0z" />
          </svg>
          <span className="mt-[2px] ml-[7px] text-[26px] leading-[30px] text-[#6cc644]">Sent</span>
        </div>
        <div className="mt-[50px] h-[2px] w-[900px] bg-[#ddd]" />

        <div className={`mt-[54px] ${labelClass}`}>2. Enter the six-digit code sent to your phone</div>
        <div className={`mt-4 text-[#aaa] ${fieldClass}`}>123456</div>
        <div className="mt-[9px] text-[24px] leading-[30px] tracking-[0.04px] text-[#767676]">It may take a minute to arrive.</div>
        <div className="mt-[33px] flex h-[68px] w-[455px] items-center justify-center rounded-[6px] border-2 border-[#5ca941] bg-gradient-to-b from-[#8add6d] to-[#60b044] pb-[2px] text-[26px] font-bold text-white [text-shadow:0_-2px_0_rgba(0,0,0,0.15)]">
          Enable two-factor authentication
        </div>
        <div className="mt-[50px] h-[2px] w-[1500px] bg-[#e7e7e7]" />
        <div className="mt-[52px] text-[26px] leading-[30px] tracking-[0.28px] text-[#4078c0]">Back to settings</div>
      </div>
    </div>
  );
}

function Notification() {
  return (
    <div className="absolute top-[84px] left-[1872px] z-20 flex h-[126px] w-[648px] rounded-[10px] bg-[#efefef] font-['Inter',sans-serif] whitespace-nowrap text-[#454545] shadow-[0_0_1px_1px_rgba(0,0,0,0.16),0_6px_30px_rgba(0,0,0,0.38)]">
      <MailStamp className="mt-[30px] ml-[21px] h-[66px] w-[66px] shrink-0 overflow-visible" />
      <div className="ml-[15px] pt-4 text-[22px] leading-8">
        <div className="text-[23px] font-medium tracking-[0.8px]">GitHub</div>
        <div className="font-semibold tracking-[0.02px]">[GitHub] Please download your two-factor reco...</div>
        <div className="font-[450] tracking-[-0.03px]">Hey romcra! You’ve just enabled two-factor auth...</div>
      </div>
    </div>
  );
}

/* ---------- Dock ---------- */

const apps: { icon: React.ReactNode; mark?: "light" | "dark" | "bar" }[] = [
  { icon: <Finder />, mark: "dark" },
  { icon: <Launchpad />, mark: "bar" },
  { icon: <MailStamp badge="5" />, mark: "dark" },
  { icon: <Contacts /> },
  { icon: <CalendarIcon /> },
  { icon: <Notes /> },
  { icon: <Messages />, mark: "dark" },
  { icon: <Photos /> },
  { icon: <Maps /> },
  { icon: <FaceTime /> },
  { icon: <PhotoBooth /> },
  { icon: <Pages /> },
  { icon: <Numbers /> },
  { icon: <Keynote /> },
  { icon: <ITunes />, mark: "light" },
  { icon: <IBooks /> },
  { icon: <AppStore /> },
  { icon: <Prefs /> },
  { icon: <SafariIcon />, mark: "light" },
  { icon: <Unarchiver /> },
  { icon: <WordIcon />, mark: "light" },
  { icon: <PowerPointIcon /> },
  { icon: <ExcelIcon /> },
  { icon: <OutlookIcon /> },
  { icon: <CommunicatorIcon /> },
  { icon: <Converter /> },
  { icon: <Chrome /> },
  { icon: <Acrobat />, mark: "light" },
  { icon: <AtomIcon />, mark: "light" },
  { icon: <TerminalIcon />, mark: "light" },
  { icon: <SkypeIcon />, mark: "light" },
];

function Dock() {
  return (
    <div className="ml-[50px] flex h-[86px] w-[2460px] rounded-t-[9px] border-t border-white/20 bg-[linear-gradient(180deg,rgba(255,255,255,0)_0,rgba(208,208,208,0.55)_100%),linear-gradient(90deg,#978f90_0,#8d8c93_90px,#6d7489_190px,#697187_380px,#85889a_470px,#a9a7b2_540px,#c2bdc4_620px,#c4c0c6_2200px,#cbc9cb_2460px)] bg-[position:540px_0,0_0] bg-no-repeat pt-[7px] pl-[5.9px]">
      {apps.map((a, i) => (
        <div key={i} className="flex w-[67.2px] flex-col items-center">
          {a.icon}
          {a.mark === "light" && <div className="mt-[2px] h-2 w-2 rounded-full bg-[#4d4d4f]" />}
          {a.mark === "dark" && <div className="mt-[2px] h-2 w-2 rounded-full bg-[#10121a]" />}
          {a.mark === "bar" && <div className="mt-[2px] h-2 w-16 rounded-full border-2 border-[#16181c]" />}
        </div>
      ))}
      <div className="mt-1 ml-[14px] h-[62px] w-[2px] bg-[#98969b]" />
      <div className="mt-[15px] ml-4 flex gap-2">
        <PdfThumb />
        <PdfThumb />
        <MailThumb />
        <div className="-ml-[2px]">
          <SearchThumb />
        </div>
      </div>
      <div className="ml-[15px]">
        <Trash />
      </div>
    </div>
  );
}

function Desktop() {
  return (
    <div className="flex h-[104px] shrink-0 flex-col overflow-hidden bg-[linear-gradient(90deg,transparent_0,transparent_2510px,#4a4a4a_2510px,#9a9a9a_2535px,#f0f0f0_2560px),linear-gradient(165deg,#55544f_0,#6b6a66_22px,#3a3a39_42px,#2b2b2b_56px,#5b5a57_74px,#7a7975_90px,#4a4a48_110px,#1a1b1d_150px)]">
      <div className="flex h-[10px] shrink-0 overflow-hidden rounded-b-[8px] bg-[#2d2d2d]">
        <div className="w-[84px] border-r-2 border-[#777] bg-[#363636]" />
        <div className="flex-1 border-b border-[#141414]" />
        <div className="w-[30px] bg-[#a8a8a8]" />
      </div>
      <div className="flex h-2 shrink-0 overflow-hidden">
        <div className="w-[50px]" />
        <div className="w-[522px] bg-[#0e1116]" />
        <div className="flex w-[1940px] bg-[#3b3b3c]">
          <div className="ml-[42px] h-2 w-6 rounded-b-[4px] bg-[#1d3f55]" />
          <div className="ml-[19px] h-2 font-['Liberation_Sans',sans-serif] text-[27px] leading-[18px] text-[#111]">Azul</div>
        </div>
      </div>
      <Dock />
    </div>
  );
}

export default function App() {
  return (
    <div className="relative flex h-[1600px] w-[2560px] flex-col overflow-hidden bg-black">
      <Defs />
      <MenuBar />
      <div className="h-[1452px] shrink-0 bg-[linear-gradient(180deg,#000_0,#000_60px,#2d2d2d_60px)] pt-[2px]">
        <div className="flex h-[1450px] flex-col overflow-hidden rounded-[10px]">
          <Toolbar />
          <TabBar />
          <Page />
        </div>
      </div>
      <Desktop />
      <Notification />
    </div>
  );
}
